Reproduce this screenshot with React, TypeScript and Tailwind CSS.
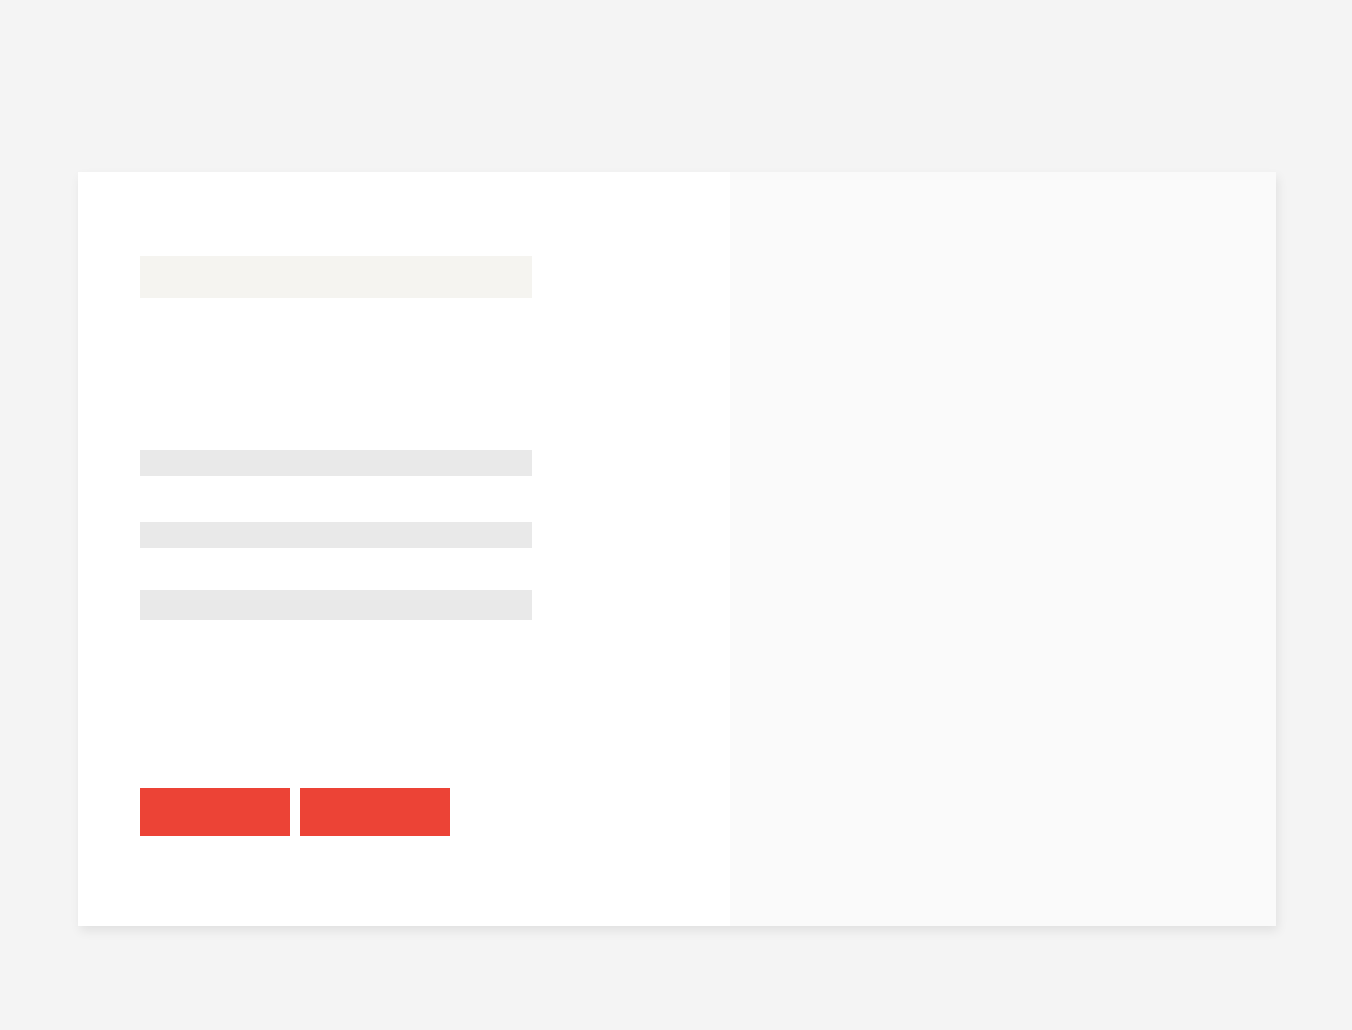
export default function App() {
  return (
    <div className="min-h-[1030px] w-full bg-[#f4f4f4] pt-[172px] pl-[78px]">
      <div className="flex h-[754px] w-[1198px] bg-white shadow-[2px_5px_10px_rgba(0,0,0,0.08)]">
        <div className="flex w-[652px] flex-col pl-[62px] pt-[84px]">
          <div className="h-[42px] w-[392px] bg-[#f5f4f0]" />
          <div className="mt-[152px] h-[26px] w-[392px] bg-[#e9e9e9]" />
          <div className="mt-[46px] h-[26px] w-[392px] bg-[#e9e9e9]" />
          <div className="mt-[42px] h-[30px] w-[392px] bg-[#e9e9e9]" />
          <div className="mt-[168px] flex gap-[10px]">
            <button className="h-[48px] w-[150px] bg-[#ec4336]" />
            <button className="h-[48px] w-[150px] bg-[#ec4336]" />
          </div>
        </div>
        <div className="flex-1 bg-[#fafafa]" />
      </div>
    </div>
  );
}
